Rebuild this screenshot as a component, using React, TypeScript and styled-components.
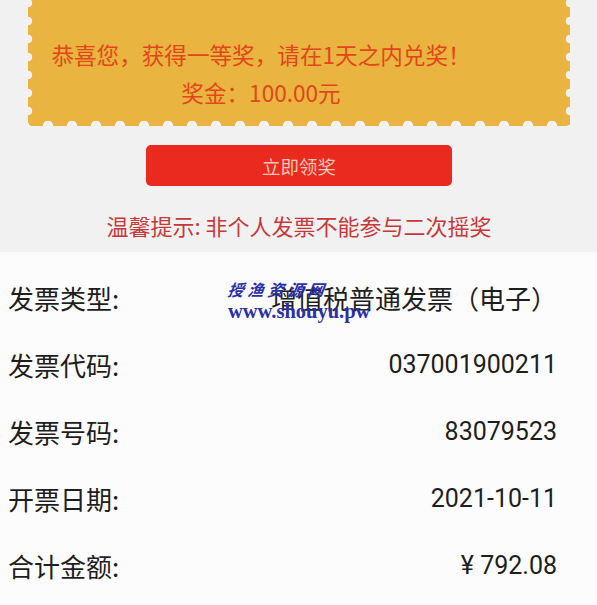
import React from "react";
import styled, { createGlobalStyle } from "styled-components";

const Global = createGlobalStyle`
  html, body { margin: 0; padding: 0; background: #fcfcfc; }
  body { font-family: Roboto, "Noto Sans CJK SC", sans-serif; }
`;

const Page = styled.div`
  width: 597px;
  height: 605px;
  overflow: hidden;
  position: relative;
  background: #fcfcfc;
`;

const Top = styled.section`
  background: #f1f1f1;
  padding: 0 27px 12px 28px;
  display: flex;
  flex-direction: column;
  align-items: center;
`;

const Stamp = styled.div`
  align-self: stretch;
  height: 126px;
  box-sizing: border-box;
  padding: 36px 76px 14px 0;
  display: flex;
  flex-direction: column;
  align-items: center;
  background:
    radial-gradient(circle at 0 50%, #f1f1f1 4px, transparent 4.6px) left -6px / 8px 18px repeat-y,
    radial-gradient(circle at 100% 50%, #f1f1f1 4px, transparent 4.6px) right -6px / 8px 18px repeat-y,
    radial-gradient(circle at 50% 100%, #f1f1f1 5px, transparent 5.6px) 8px bottom / 24px 8px repeat-x,
    #e9b43f;
`;

const StampLine = styled.div`
  font-family: "Noto Sans CJK SC", sans-serif;
  font-size: 22.6px;
  line-height: 38px;
  color: #e2461b;
  white-space: nowrap;
`;

const ClaimButton = styled.button`
  margin-top: 19px;
  width: 306px;
  height: 41px;
  border: none;
  border-radius: 5px;
  background: #ea2a1f;
  color: #f7c6b6;
  font-family: "Noto Sans CJK SC", sans-serif;
  font-size: 18.5px;
  padding: 0;
`;

const Tip = styled.div`
  margin-top: 24px;
  font-family: "Noto Sans CJK SC", sans-serif;
  font-size: 22px;
  line-height: 30px;
  color: #c7383a;
  white-space: nowrap;
`;

const Details = styled.section`
  padding: 12px 40px 0 8px;
  display: flex;
  flex-direction: column;
`;

const Row = styled.div`
  height: 67px;
  display: flex;
  align-items: center;
  justify-content: space-between;
  color: #1e1e1e;
`;

const Label = styled.span`
  font-family: "Noto Sans CJK SC", sans-serif;
  font-size: 26px;
`;

const Value = styled.span<{ $cjk?: boolean }>`
  font-family: Roboto, "Noto Sans CJK SC", sans-serif;
  font-size: ${(p) => (p.$cjk ? "26px" : "25px")};
`;

const Watermark = styled.div`
  position: absolute;
  left: 228px;
  top: 279px;
  display: flex;
  flex-direction: column;
  color: #2b2fa8;
  pointer-events: none;
`;

const WmTitle = styled.span`
  font-family: "Noto Sans CJK SC", sans-serif;
  font-weight: 700;
  font-style: italic;
  font-size: 16px;
  line-height: 21px;
  letter-spacing: 4px;
  transform: skewX(-8deg);
`;

const WmUrl = styled.span`
  font-family: "Liberation Serif", serif;
  font-weight: 700;
  font-size: 20.5px;
  line-height: 22px;
`;

const rows: [string, string, boolean][] = [
  ["发票类型:", "增值税普通发票（电子）", true],
  ["发票代码:", "037001900211", false],
  ["发票号码:", "83079523", false],
  ["开票日期:", "2021-10-11", false],
  ["合计金额:", "¥ 792.08", false],
];

export default function App() {
  return (
    <Page>
      <Global />
      <Top>
        <Stamp>
          <StampLine>恭喜您，获得一等奖，请在1天之内兑奖！</StampLine>
          <StampLine>奖金：100.00元</StampLine>
        </Stamp>
        <ClaimButton>立即领奖</ClaimButton>
        <Tip>温馨提示: 非个人发票不能参与二次摇奖</Tip>
      </Top>
      <Details>
        {rows.map(([l, v, cjk]) => (
          <Row key={l}>
            <Label>{l}</Label>
            <Value $cjk={cjk}>{v}</Value>
          </Row>
        ))}
      </Details>
      <Watermark>
        <WmTitle>授渔资源网</WmTitle>
        <WmUrl>www.shouyu.pw</WmUrl>
      </Watermark>
    </Page>
  );
}
